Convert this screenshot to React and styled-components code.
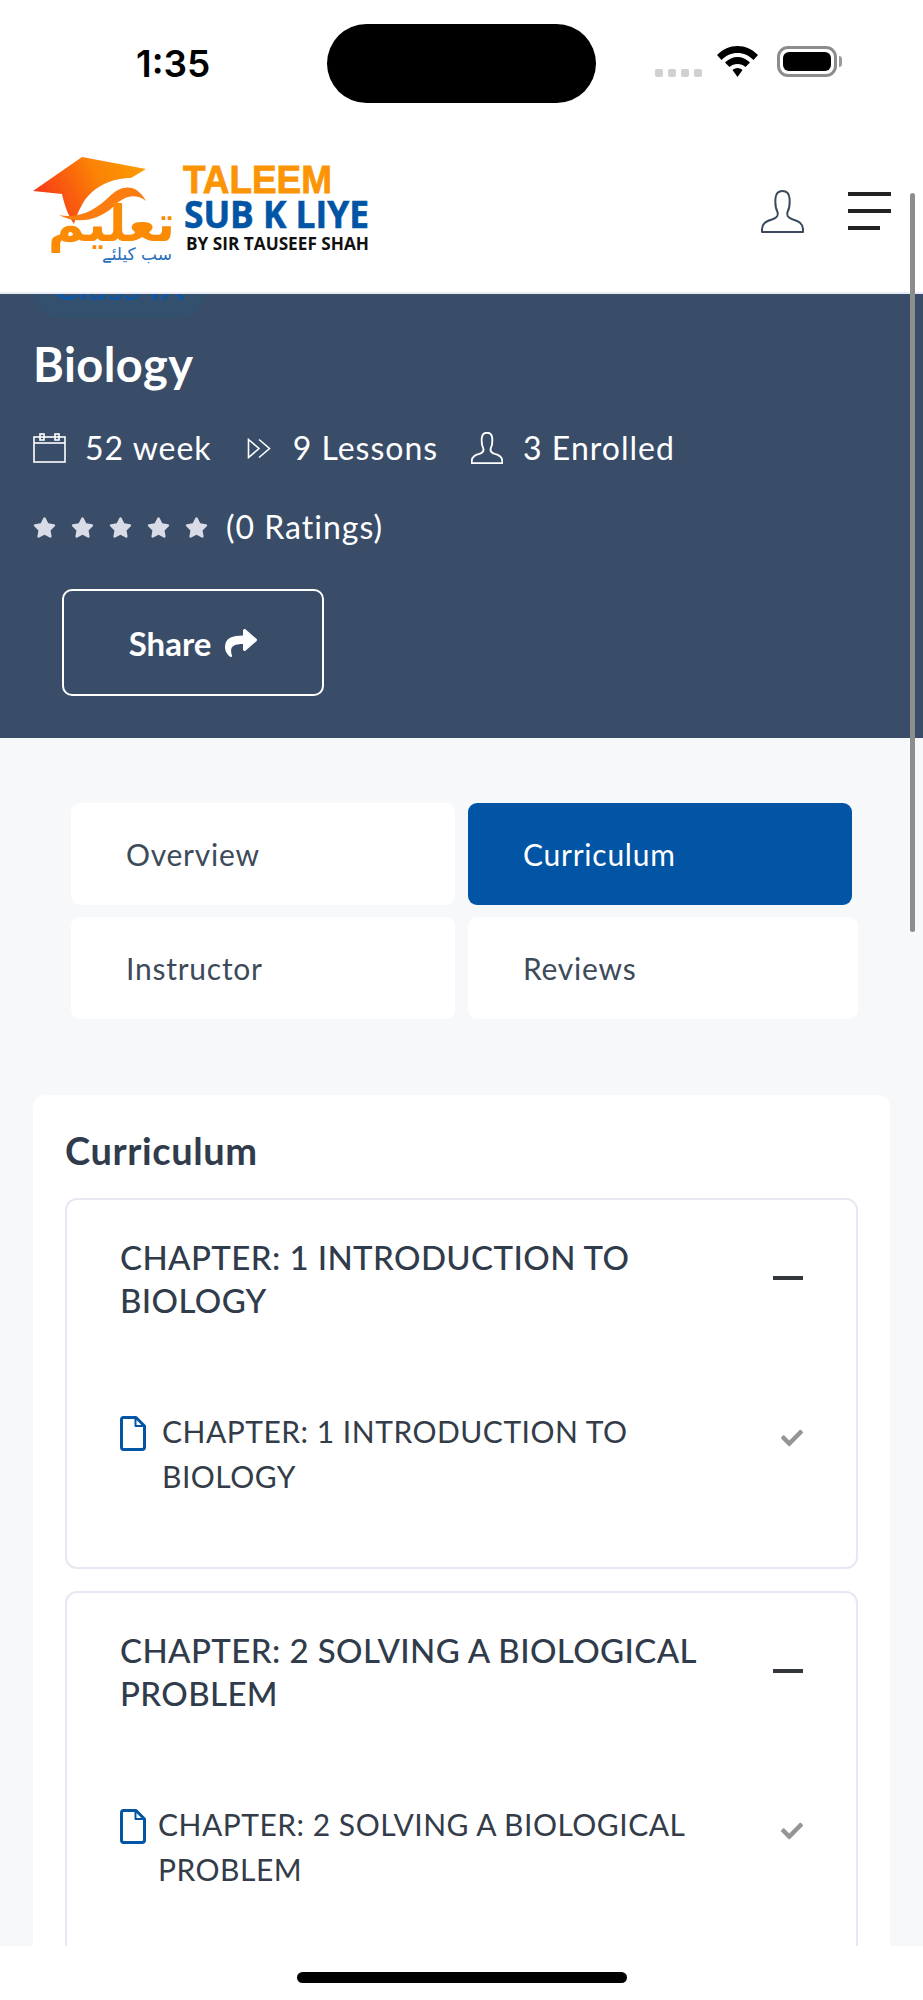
import React from "react";
import styled, { createGlobalStyle } from "styled-components";
import { FaShare, FaStar, FaCheck } from "react-icons/fa";

const Global = createGlobalStyle`
  html, body { margin: 0; padding: 0; background: #fff; }
  * { box-sizing: border-box; }
`;

const BODY = `"Lato", "Open Sans", sans-serif`;
const HEAD = `"Lato", "Noto Sans", sans-serif`;

const Page = styled.div`
  position: relative;
  width: 923px;
  height: 2000px;
  display: flex;
  flex-direction: column;
  overflow: hidden;
  background: #f7f8fa;
  font-family: ${BODY};
`;

const StatusBar = styled.div`
  height: 130px;
  flex: none;
  background: #fff;
  display: grid;
  grid-template-columns: 327px 269px 1fr;
`;
const Time = styled.div`
  padding: 42px 0 0 136px;
  font: 600 37px/44px "Inter", sans-serif;
  letter-spacing: 0;
  color: #000;
`;
const Island = styled.div`
  height: 79px;
  margin-top: 24px;
  border-radius: 40px;
  background: #000;
`;
const StatusIcons = styled.div`
  height: 31px;
  margin-top: 46px;
  padding-left: 59px;
  display: flex;
  align-items: flex-end;
`;
const Signal = styled.div`
  display: flex;
  gap: 5px;
  margin-right: 15px;
`;
const Dot = styled.span`
  width: 8px;
  height: 8px;
  border-radius: 2px;
  background: #d0d0d0;
`;
const Battery = styled.div`
  width: 60px;
  height: 31px;
  margin-left: 19px;
  padding: 3px;
  border: 3px solid #8c8c8c;
  border-radius: 11px;
`;
const BatteryFill = styled.div`
  height: 100%;
  border-radius: 6px;
  background: #000;
`;
const BatteryTip = styled.span`
  width: 3px;
  height: 11px;
  margin-left: 2px;
  margin-bottom: 10px;
  border-radius: 0 3px 3px 0;
  background: #9a9a9a;
`;

const Header = styled.header`
  height: 162px;
  flex: none;
  background: #fff;
  padding: 0 32px 0 33px;
  display: flex;
  align-items: center;
`;
const HeaderSpacer = styled.div`
  flex: 1;
`;
const Burger = styled.div`
  width: 43px;
  margin-left: 44px;
  display: flex;
  flex-direction: column;
  gap: 13px;
`;
const BurgerLine = styled.span`
  display: block;
  height: 4px;
  width: ${(p) => (p.$short ? "32px" : "43px")};
  background: #222;
`;

const Hero = styled.section`
  position: relative;
  flex: none;
  height: 446px;
  padding: 0 33px;
  background: #394d69;
  border-top: 2px solid #e8ecf4;
  color: #fff;
  overflow: hidden;
`;
const HiddenChip = styled.div`
  position: absolute;
  left: 33px;
  top: -26px;
  width: 172px;
  height: 50px;
  border-radius: 0 0 26px 26px;
  background: #33506f;
  color: #0d55a5;
  font: 400 38px/34px ${BODY};
  text-align: center;
`;
const Title = styled.h1`
  margin: 0;
  padding-top: 44px;
  font: 700 47px/52px ${HEAD};
  letter-spacing: 0.4px;
  position: relative;
`;
const Meta = styled.div`
  margin-top: 36px;
  height: 44px;
  display: flex;
  align-items: center;
  position: relative;
`;
const MetaText = styled.span`
  font-size: 32px;
  line-height: 44px;
  margin-left: ${(p) => p.$gap}px;
  margin-right: ${(p) => p.$after}px;
  letter-spacing: 1px;
`;
const Rating = styled.div`
  margin-top: 35px;
  height: 44px;
  display: flex;
  align-items: center;
  color: #d9dbe6;
`;
const Stars = styled.div`
  display: flex;
  gap: 15px;
  font-size: 23px;
  line-height: 0;
`;
const RatingText = styled.span`
  margin-left: 18px;
  font-size: 32px;
  line-height: 44px;
  letter-spacing: 1px;
  color: #fff;
`;
const ShareButton = styled.button`
  display: flex;
  align-items: center;
  justify-content: center;
  gap: 14px;
  margin: 40px 0 0 29px;
  width: 262px;
  height: 107px;
  border: 2px solid #fff;
  border-radius: 10px;
  background: transparent;
  color: #fff;
  font: 700 33px/40px ${HEAD};
`;

const Main = styled.main`
  flex: 1;
  min-height: 0;
  overflow: hidden;
  padding-top: 65px;
`;
const Tabs = styled.div`
  margin-left: 71px;
  display: grid;
  grid-template-columns: 384px 390px;
  column-gap: 13px;
  row-gap: 12px;
`;
const Tab = styled.div`
  height: 102px;
  padding-left: 55px;
  display: flex;
  align-items: center;
  border-radius: 9px;
  font-size: 30px;
  letter-spacing: 0.75px;
  background: ${(p) => (p.$active ? "#0254a5" : "#fff")};
  color: ${(p) => (p.$active ? "#fff" : "#3d4a5a")};
  margin-right: ${(p) => (p.$active ? "6px" : "0")};
`;
const Card = styled.section`
  margin: 76px 33px 0;
  padding: 30px 32px 0;
  background: #fff;
  border-radius: 12px 12px 0 0;
`;
const CardTitle = styled.h2`
  margin: 0 0 22px;
  font: 700 38px/51px ${HEAD};
  letter-spacing: 0.6px;
  color: #303b4b;
`;
const Accordion = styled.article`
  border: 2px solid #e6e8f3;
  border-radius: 12px;
  margin-bottom: 22px;
  height: 371px;
  padding: 36px 53px 0;
`;
const AccordionHead = styled.div`
  display: flex;
  align-items: flex-start;
  justify-content: space-between;
`;
const ChapterTitle = styled.h3`
  margin: 0;
  width: 600px;
  font: 500 33px/43px ${HEAD};
  letter-spacing: 0.4px;
  color: #303b4b;
`;
const Minus = styled.span`
  flex: none;
  width: 30px;
  height: 4px;
  margin-top: 40px;
  background: #33363b;
`;
const Lesson = styled.div`
  margin-top: 87px;
  display: flex;
  align-items: flex-start;
  justify-content: space-between;
`;
const LessonBody = styled.div`
  display: flex;
  align-items: flex-start;
`;
const LessonText = styled.div`
  max-width: 545px;
  margin-left: ${(p) => p.$gap}px;
  font-size: 30px;
  line-height: 45px;
  letter-spacing: 0.5px;
  color: #333c48;
`;
const CheckMark = styled.span`
  flex: none;
  margin-top: 18px;
  font-size: 22px;
  line-height: 0;
  color: #959595;
`;

const HomeArea = styled.div`
  flex: none;
  height: 54px;
  background: #fff;
  display: flex;
  justify-content: center;
  padding-top: 26px;
`;
const HomeBar = styled.div`
  width: 330px;
  height: 11px;
  border-radius: 6px;
  background: #000;
`;
const ScrollThumb = styled.div`
  position: absolute;
  left: 910px;
  top: 193px;
  width: 5px;
  height: 739px;
  border-radius: 3px;
  background: #8d8d8d;
`;

const Logo = () => (
  <svg width="338" height="108" viewBox="0 0 338 108">
    <defs>
      <linearGradient id="capG" x1="0" y1="0.6" x2="1" y2="0.3">
        <stop offset="0" stopColor="#f7331a" />
        <stop offset="0.6" stopColor="#fb8205" />
        <stop offset="1" stopColor="#fd9a05" />
      </linearGradient>
    </defs>
    <path d="M0 34 L49 0 L113 12 L98 21 C78 21 60 30 50 46 C45 55 43 60 41 67 C35 58 32 50 29 37 Z" fill="url(#capG)" />
    <path d="M26 58 C48 62 64 52 78 38 C90 27 104 27 113 44 C101 35 90 40 80 50 C66 63 44 68 26 58 Z" fill="#fb7d10" />
    <text x="142" y="84" textAnchor="end" fontFamily="DejaVu Sans, sans-serif" fontWeight="700" fontSize="50" fill="#fb8a05">
      تعلیم
    </text>
    <text x="139" y="103" textAnchor="end" fontFamily="DejaVu Sans, sans-serif" fontSize="17" fill="#2a6fba">
      سب کیلئے
    </text>
    <text x="150" y="36" fontFamily="Liberation Sans, sans-serif" fontWeight="700" fontSize="38" fill="#fb9505" stroke="#fb9505" strokeWidth="0.8" textLength="149" lengthAdjust="spacingAndGlyphs">
      TALEEM
    </text>
    <text x="151" y="71" fontFamily="Open Sans, sans-serif" fontWeight="700" fontSize="38" fill="#0254a5" stroke="#0254a5" strokeWidth="0.6" textLength="185" lengthAdjust="spacingAndGlyphs">
      SUB K LIYE
    </text>
    <text x="153" y="93" fontFamily="Open Sans, sans-serif" fontWeight="700" fontSize="18" fill="#111" textLength="183" lengthAdjust="spacingAndGlyphs">
      BY SIR TAUSEEF SHAH
    </text>
  </svg>
);

const Wifi = () => (
  <svg width="41" height="31" viewBox="0 0 41 31">
    <path d="M20.5 0 C28 0 35 3 41 9 L36.5 14 C32 9.500 26.500 7 20.500 7 C14.500 7 9 9.500 4.500 14 L0 9 C6 3 13 0 20.500 0 Z" fill="#000" />
    <path d="M20.500 11 C25 11 29.500 13 33 16.500 L28.500 21 C26.500 19 23.500 18 20.500 18 C17.500 18 14.500 19 12.500 21 L8 16.500 C11.500 13 16 11 20.500 11 Z" fill="#000" />
    <path d="M20.500 22 C22.500 22 24.500 23 25.500 24 L20.500 31 L15.500 24 C16.500 23 18.500 22 20.500 22 Z" fill="#000" />
  </svg>
);

const Person = ({ size, color, width = 2 }) => (
  <svg width={size} height={size} viewBox="0 0 43 43" fill="none" stroke={color} strokeWidth={width} strokeLinejoin="round">
    <path d="M1 42 V39 C1 34 5 31 11 29.500 C16 28 17.500 26 16.500 22 C14.800 19 14 14 14.500 8 C15 3 18 1 21.500 1 C25 1 28 3 28.500 8 C29 14 28.200 19 26.500 22 C25.500 26 27 28 32 29.500 C38 31 42 34 42 39 V42 Z" />
  </svg>
);

const Calendar = () => (
  <svg width="33" height="30" viewBox="0 0 33 30" fill="none" stroke="#fff" strokeWidth="1.600">
    <rect x="1" y="4" width="31" height="25" />
    <path d="M1 10 H32" />
    <rect x="7" y="1" width="4" height="6" />
    <rect x="22" y="1" width="4" height="6" />
  </svg>
);

const Chevrons = () => (
  <svg width="24" height="21" viewBox="0 0 24 21" fill="none" stroke="#fff" strokeWidth="1.600" strokeLinejoin="miter">
    <path d="M1.500 1.500 L12 10.500 L1.500 19.500 Z" />
    <path d="M12 1.500 L22.500 10.500 L12 19.500" />
  </svg>
);

const FileIcon = () => (
  <svg width="26" height="35" viewBox="0 0 26 35" fill="none" stroke="#0254a5" strokeWidth="3" strokeLinejoin="round" style={{ flex: "none", marginTop: 7 }}>
    <path d="M3.500 1.500 H16 L24.500 10 V31 C24.500 32.500 23.500 33.500 22 33.500 H3.500 C2.300 33.500 1.500 32.500 1.500 31 V4 C1.500 2.500 2.300 1.500 3.500 1.500 Z" />
    <path d="M15.500 1.500 V10 H24.500" strokeWidth="2" />
  </svg>
);

const chapters = [
  { title: "CHAPTER: 1 INTRODUCTION TO BIOLOGY", gap: 16 },
  { title: "CHAPTER: 2 SOLVING A BIOLOGICAL PROBLEM", gap: 12 },
];

export default function App() {
  return (
    <Page>
      <Global />
      <StatusBar>
        <Time>1:35</Time>
        <Island />
        <StatusIcons>
          <Signal>
            <Dot />
            <Dot />
            <Dot />
            <Dot />
          </Signal>
          <Wifi />
          <Battery>
            <BatteryFill />
          </Battery>
          <BatteryTip />
        </StatusIcons>
      </StatusBar>
      <Header>
        <Logo />
        <HeaderSpacer />
        <Person size={43} color="#3a4a5c" />
        <Burger>
          <BurgerLine />
          <BurgerLine />
          <BurgerLine $short />
        </Burger>
      </Header>
      <Hero>
        <HiddenChip>Class IX</HiddenChip>
        <Title>Biology</Title>
        <Meta>
          <Calendar />
          <MetaText $gap={19} $after={35}>52 week</MetaText>
          <Chevrons />
          <MetaText $gap={22} $after={33}>9 Lessons</MetaText>
          <Person size={32} color="#fff" width={2.500} />
          <MetaText $gap={20} $after={0}>3 Enrolled</MetaText>
        </Meta>
        <Rating>
          <Stars>
            <FaStar />
            <FaStar />
            <FaStar />
            <FaStar />
            <FaStar />
          </Stars>
          <RatingText>(0 Ratings)</RatingText>
        </Rating>
        <ShareButton>
          Share <FaShare size={32} />
        </ShareButton>
      </Hero>
      <Main>
        <Tabs>
          <Tab>Overview</Tab>
          <Tab $active>Curriculum</Tab>
          <Tab>Instructor</Tab>
          <Tab>Reviews</Tab>
        </Tabs>
        <Card>
          <CardTitle>Curriculum</CardTitle>
          {chapters.map((c) => (
            <Accordion key={c.title}>
              <AccordionHead>
                <ChapterTitle>{c.title}</ChapterTitle>
                <Minus />
              </AccordionHead>
              <Lesson>
                <LessonBody>
                  <FileIcon />
                  <LessonText $gap={c.gap}>{c.title}</LessonText>
                </LessonBody>
                <CheckMark>
                  <FaCheck />
                </CheckMark>
              </Lesson>
            </Accordion>
          ))}
        </Card>
      </Main>
      <HomeArea>
        <HomeBar />
      </HomeArea>
      <ScrollThumb />
    </Page>
  );
}
